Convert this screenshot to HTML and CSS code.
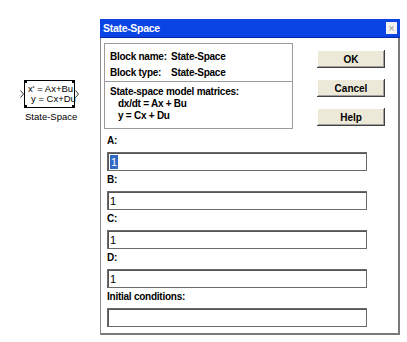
FILE: index.html
```html
<!DOCTYPE html>
<html lang="en">
<head>
    <meta charset="UTF-8">
    <title>State-Space</title>
    <link rel="stylesheet" href="styles.css">
</head>
<body>

    <div class="page">
        <!-- Simulink block on the model canvas -->
        <div class="model">
            <div class="sl-row">
                <svg class="port" width="4" height="8" viewBox="0 0 4 8"><path d="M0.5 0.5 L3.5 4 L0.5 7.5" fill="none" stroke="#333" stroke-width="1"/></svg>
                <div class="sl-box">
                    <span class="handle tl"></span><span class="handle tr"></span>
                    <span class="handle bl"></span><span class="handle br"></span>
                    <div class="eq">x' = Ax+Bu</div>
                    <div class="eq eq2">y = Cx+Du</div>
                </div>
                <svg class="port" width="4" height="8" viewBox="0 0 4 8"><path d="M0.5 0.5 L3.5 4 L0.5 7.5" fill="none" stroke="#333" stroke-width="1"/></svg>
            </div>
            <div class="sl-name">State-Space</div>
        </div>

        <!-- Block parameters dialog -->
        <div class="dialog">
            <div class="titlebar">
                <span class="title">State-Space</span>
                <span class="close">&times;</span>
            </div>
            <div class="dlg-body">
                <div class="top">
                    <div class="info">
                        <div class="box names">
                            <div class="line"><span class="key">Block name:</span>State-Space</div>
                            <div class="line"><span class="key">Block type:</span>State-Space</div>
                        </div>
                        <div class="box desc">
                            <div class="line">State-space model matrices:</div>
                            <div class="line indent">dx/dt = Ax + Bu</div>
                            <div class="line indent">y = Cx + Du</div>
                        </div>
                    </div>
                    <div class="buttons">
                        <button>OK</button>
                        <button>Cancel</button>
                        <button>Help</button>
                    </div>
                </div>

                <div class="fields">
                    <div class="label">A:</div>
                    <div class="input"><span class="sel">1</span></div>
                    <div class="label">B:</div>
                    <div class="input">1</div>
                    <div class="label">C:</div>
                    <div class="input">1</div>
                    <div class="label">D:</div>
                    <div class="input">1</div>
                    <div class="label">Initial conditions:</div>
                    <div class="input"></div>
                </div>
            </div>
        </div>
    </div>

</body>
</html>
```

FILE: styles.css
```css
body {
    margin: 0;
    background: #ffffff;
    font-family: "Liberation Sans", Arial, sans-serif;
    color: #000;
}
.page {
    display: flex;
    align-items: flex-start;
}

/* model canvas */
.model {
    width: 100px;
    padding-top: 80px;
}
.sl-row {
    display: flex;
    align-items: center;
    margin-left: 20px;
}
.port {
    display: block;
}
.sl-box {
    position: relative;
    width: 49px;
    height: 26px;
    border: 1px solid #000;
    display: flex;
    flex-direction: column;
    justify-content: center;
}
.eq {
    font-size: 9.5px;
    line-height: 10px;
    padding-left: 3px;
    white-space: nowrap;
}
.eq2 {
    padding-left: 6px;
}
.handle {
    position: absolute;
    width: 3px;
    height: 3px;
    background: #000;
}
.handle.tl { top: -1px; left: -1px; }
.handle.tr { top: -1px; right: -1px; }
.handle.bl { bottom: -1px; left: -1px; }
.handle.br { bottom: -1px; right: -1px; }
.sl-name {
    margin-left: 25px;
    margin-top: 3px;
    font-size: 9.5px;
    line-height: 12px;
}

/* dialog */
.dialog {
    margin-top: 19px;
    width: 300px;
}
.titlebar {
    height: 19px;
    background: #0a44e4;
    border-bottom: 1px solid #0026a0;
    box-sizing: border-box;
    display: flex;
    align-items: center;
    justify-content: space-between;
}
.title {
    color: #fff;
    font-weight: bold;
    font-size: 10.5px;
    letter-spacing: -0.3px;
    padding-left: 3px;
}
.close {
    width: 11px;
    height: 12px;
    margin-right: 3px;
    background: #f4f2ee;
    color: #999;
    font-size: 11px;
    line-height: 12px;
    text-align: center;
}
.dlg-body {
    height: 297px;
    box-sizing: border-box;
    border-left: 1px solid #8a8a8a;
    border-right: 2px solid #7a7a7a;
    border-bottom: 2px solid #7a7a7a;
    padding: 5px 0 0 3px;
    font-size: 10px;
    font-weight: bold;
    letter-spacing: -0.25px;
}
.top {
    display: flex;
    align-items: flex-start;
}
.info {
    width: 189px;
}
.box {
    border: 1px solid #9a9a9a;
}
.names {
    height: 38px;
    box-sizing: border-box;
    border-bottom: none;
    padding: 5px 0 0 5px;
}
.names .line {
    line-height: 16px;
}
.key {
    display: inline-block;
    width: 61px;
}
.desc {
    padding: 4px 0 6px 5px;
}
.desc .line {
    line-height: 12px;
}
.indent {
    padding-left: 8px;
}
.buttons {
    display: flex;
    flex-direction: column;
    gap: 11px;
    margin: 7px 0 0 24px;
}
button {
    width: 68px;
    height: 18px;
    padding: 0;
    border: none;
    background: #ece9d8;
    box-shadow: inset -1px -1px 0 #404040, inset 1px 1px 0 #ffffff, inset -2px -2px 0 #a0a0a0;
    font-family: "Liberation Sans", Arial, sans-serif;
    font-size: 10px;
    font-weight: bold;
    color: #000;
}
.fields {
    margin: 4px 0 0 3px;
}
.label {
    line-height: 15px;
    margin-bottom: 4px;
}
.input {
    width: 260px;
    height: 19px;
    box-sizing: border-box;
    border: 1px solid #6a6a6a;
    box-shadow: inset 1px 1px 0 #555;
    margin-bottom: 1px;
    padding: 2px 0 0 2px;
    font-size: 11px;
    font-weight: normal;
    line-height: 14px;
}
.sel {
    display: inline-block;
    background: #316ac5;
    color: #fff;
    padding: 0 1px;
}
```
